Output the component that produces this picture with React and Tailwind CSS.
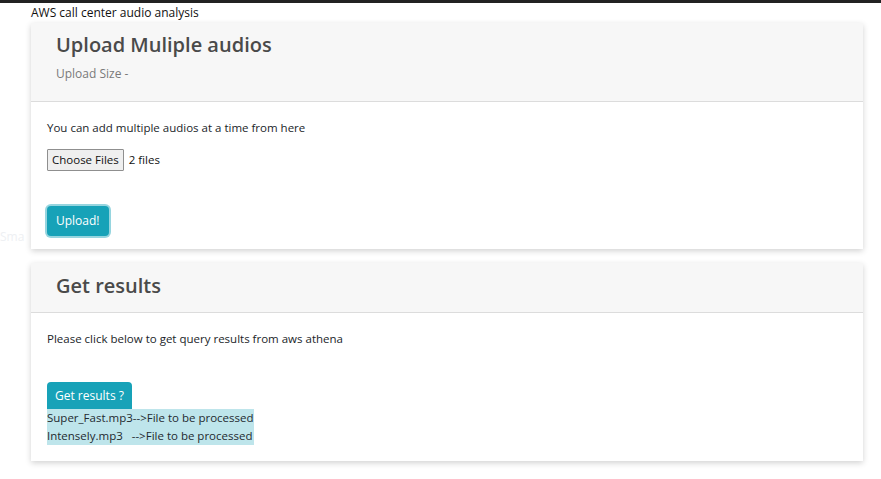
import React from 'react';

const font = { fontFamily: '"Open Sans", "Noto Sans", sans-serif' };

const Card = ({ title, subtitle, headerClass, children, bodyClass }) => (
  <div className="ml-[31px] w-[832px] bg-white shadow-[0_2px_6px_rgba(0,0,0,0.18)]">
    <div className={`bg-[#f7f7f7] border-b border-[#dcdcdc] px-[25px] ${headerClass}`}>
      <h2 className="text-[20px] leading-[28px] font-semibold text-[#4a4a4a]">{title}</h2>
      {subtitle && <p className="mt-[7px] text-[12px] leading-[16px] text-[#7a7a7a]">{subtitle}</p>}
    </div>
    <div className={`px-[16px] ${bodyClass}`}>{children}</div>
  </div>
);

export default function App() {
  return (
    <div className="relative min-h-[479px] bg-white text-[#212529]" style={font}>
      <div className="h-[3px] bg-[#222]" />
      <div className="pl-[31px] h-[20px] text-[12px] leading-[20px] text-[#111]">
        AWS call center audio analysis
      </div>
      <span className="absolute left-0 top-[228px] text-[12px] text-[#eef0f3]">Sma</span>

      <Card
        title="Upload Muliple audios"
        subtitle="Upload Size -"
        headerClass="pt-[8px] h-[79px]"
        bodyClass="pt-[17px] h-[147px]"
      >
        <p className="text-[11.5px] leading-[18px]">You can add multiple audios at a time from here</p>
        <div className="mt-[12px] flex items-center gap-[5px] text-[11.5px]">
          <span className="h-[22px] px-[4px] flex items-center border border-[#8f8f8f] bg-[#efefef] rounded-[1px] text-[#111]">
            Choose Files
          </span>
          <span className="text-[#111]">2 files</span>
        </div>
        <button className="mt-[35px] h-[30px] px-[9px] rounded-[4px] bg-[#17a2b8] text-white text-[12px] shadow-[0_0_0_2px_rgba(23,162,184,0.45)]">
          Upload!
        </button>
      </Card>

      <div className="h-[14px]" />

      <Card
        title="Get results"
        headerClass="pt-[9px] h-[50px]"
        bodyClass="pt-[17px] pb-[16px]"
      >
        <p className="text-[11.5px] leading-[18px]">Please click below to get query results from aws athena</p>
        <button className="mt-[34px] h-[27px] px-[8px] rounded-t-[4px] bg-[#17a2b8] text-white text-[12px]">
          Get results ?
        </button>
        <div className="w-max bg-[#bee5eb] text-[11.5px] leading-[18px] text-[#1e2a30]">
          <div>Super_Fast.mp3--&gt;File to be processed</div>
          <div className="whitespace-pre">Intensely.mp3   --&gt;File to be processed</div>
        </div>
      </Card>
    </div>
  );
}
